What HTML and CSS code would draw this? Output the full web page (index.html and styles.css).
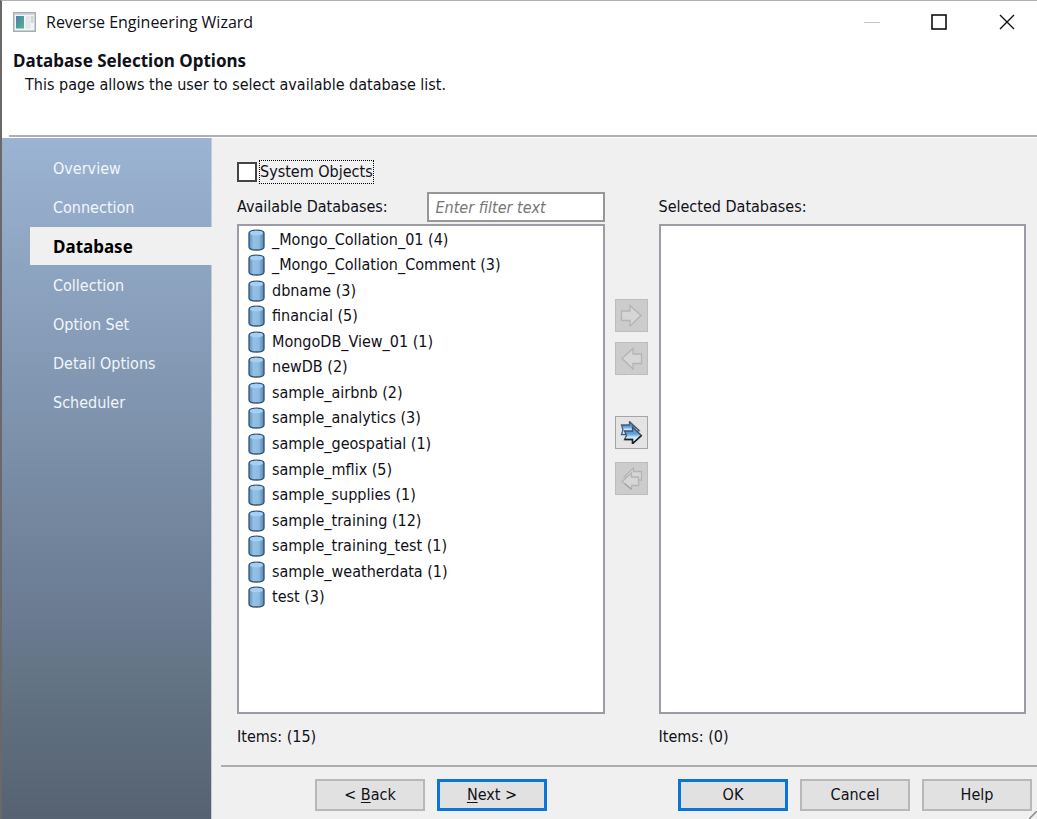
FILE: index.html
```html
<!DOCTYPE html>
<html lang="en">
<head>
<meta charset="utf-8">
<title>Reverse Engineering Wizard</title>
<link rel="stylesheet" href="styles.css">
</head>
<body>
<svg class="defs" aria-hidden="true">
  <defs>
    <linearGradient id="cyl" x1="0" x2="1" y1="0" y2="0">
      <stop offset="0" stop-color="#5d90bd"/>
      <stop offset="0.3" stop-color="#93c0e6"/>
      <stop offset="0.65" stop-color="#8dbbe2"/>
      <stop offset="1" stop-color="#5785b0"/>
    </linearGradient>
    <linearGradient id="blue" x1="0" x2="0" y1="0" y2="1">
      <stop offset="0" stop-color="#4d8fce"/>
      <stop offset="0.4" stop-color="#5b9fdb"/>
      <stop offset="0.6" stop-color="#cfe4f6"/>
      <stop offset="1" stop-color="#f7fbff"/>
    </linearGradient>
    <linearGradient id="pane" x1="0" x2="1" y1="0" y2="1">
      <stop offset="0" stop-color="#4d7fb0"/>
      <stop offset="1" stop-color="#55b388"/>
    </linearGradient>
    <symbol id="db" viewBox="0 0 17 22">
      <path d="M1 4C1 0.2 16 0.2 16 4V18C16 22 1 22 1 18Z" fill="url(#cyl)" stroke="#35526c" stroke-width="1.300"/>
      <ellipse cx="8.500" cy="4" rx="6.500" ry="2.300" fill="#a4d0f5"/>
    </symbol>
  </defs>
</svg>
<div class="window">
  <header class="titlebar">
    <svg class="app-icon" viewBox="0 0 23 20" aria-hidden="true">
      <rect x="0.750" y="0.750" width="21.500" height="18.500" fill="#f3f4f5" stroke="#a3adb5" stroke-width="1.500"/>
      <path d="M1.500 2H21.500" stroke="#c4ccd3" stroke-width="1.500"/>
      <rect x="3" y="4" width="8" height="12.500" fill="url(#pane)"/>
      <rect x="12.500" y="4" width="5" height="12.500" fill="#e4e6e9"/>
      <rect x="18" y="4" width="2.500" height="7" fill="#c9d9d8"/>
    </svg>
    <h1 class="title">Reverse Engineering Wizard</h1>
    <div class="caption-buttons">
      <button class="caption minimize" aria-label="Minimize" disabled><svg viewBox="0 0 16 16"><path d="M0 8.500H16" stroke="#c4c4c4"/></svg></button>
      <button class="caption maximize" aria-label="Maximize"><svg viewBox="0 0 16 16"><rect x="1" y="1" width="14" height="14" fill="none" stroke="#000" stroke-width="1.500"/></svg></button>
      <button class="caption close" aria-label="Close"><svg viewBox="0 0 16 16"><path d="M1 1L15 15M15 1L1 15" stroke="#111" stroke-width="1.400"/></svg></button>
    </div>
  </header>
  <div class="banner">
    <h2 class="banner-title">Database Selection Options</h2>
    <p class="banner-text">This page allows the user to select available database list.</p>
  </div>
  <div class="body">
    <nav class="steps">
      <a class="step" href="#">Overview</a>
      <a class="step" href="#">Connection</a>
      <a class="step current" href="#" aria-current="step">Database</a>
      <a class="step" href="#">Collection</a>
      <a class="step" href="#">Option Set</a>
      <a class="step" href="#">Detail Options</a>
      <a class="step" href="#">Scheduler</a>
    </nav>
    <main class="main">
      <div class="content">
        <div class="check-row">
          <input class="check" type="checkbox" id="sys"><label class="check-label" for="sys">System Objects</label>
        </div>
        <div class="picker">
          <div class="list-head">
            <label for="filter">Available Databases:</label>
            <input class="filter" id="filter" type="text" placeholder="Enter filter text">
          </div>
          <span></span>
          <div class="list-head">Selected Databases:</div>
          <div class="list">
            <ul class="items">
              <li class="item"><svg class="db"><use href="#db"/></svg>_Mongo_Collation_01 (4)</li>
              <li class="item"><svg class="db"><use href="#db"/></svg>_Mongo_Collation_Comment (3)</li>
              <li class="item"><svg class="db"><use href="#db"/></svg>dbname (3)</li>
              <li class="item"><svg class="db"><use href="#db"/></svg>financial (5)</li>
              <li class="item"><svg class="db"><use href="#db"/></svg>MongoDB_View_01 (1)</li>
              <li class="item"><svg class="db"><use href="#db"/></svg>newDB (2)</li>
              <li class="item"><svg class="db"><use href="#db"/></svg>sample_airbnb (2)</li>
              <li class="item"><svg class="db"><use href="#db"/></svg>sample_analytics (3)</li>
              <li class="item"><svg class="db"><use href="#db"/></svg>sample_geospatial (1)</li>
              <li class="item"><svg class="db"><use href="#db"/></svg>sample_mflix (5)</li>
              <li class="item"><svg class="db"><use href="#db"/></svg>sample_supplies (1)</li>
              <li class="item"><svg class="db"><use href="#db"/></svg>sample_training (12)</li>
              <li class="item"><svg class="db"><use href="#db"/></svg>sample_training_test (1)</li>
              <li class="item"><svg class="db"><use href="#db"/></svg>sample_weatherdata (1)</li>
              <li class="item"><svg class="db"><use href="#db"/></svg>test (3)</li>
            </ul>
          </div>
          <div class="transfer">
            <div class="pair single">
              <button class="move" disabled aria-label="Add"><svg viewBox="0 0 23 23"><path d="M1.500 7H10V1.500L21 11.500L10 22V16.500H1.500Z" fill="#d6d6d6" stroke="#b4b4b4" stroke-width="1.300"/></svg></button>
              <button class="move" disabled aria-label="Remove"><svg viewBox="0 0 23 23"><path d="M21.500 7H13V1.500L2 11.500L13 22V16.500H21.500Z" fill="#d6d6d6" stroke="#b4b4b4" stroke-width="1.300"/></svg></button>
            </div>
            <div class="pair all">
              <button class="move" aria-label="Add all"><svg viewBox="0 0 23 23"><path d="M1.500 4H9.500V0.800L19 9.500L13 13.500H1.500L3 9Z" fill="url(#blue)" stroke="#3f5f80" stroke-width="1.300"/><path d="M10 1L20 10.500" stroke="#555" stroke-width="1.300" stroke-dasharray="1.500 1.200"/><path d="M4.500 10H12.500V6L21.500 14.500L12.500 23V18.500H4.500L6.500 14.500Z" fill="url(#blue)" stroke="#3a536b" stroke-width="1.300"/><path d="M4.500 18.500H12.500V22.500L21.500 14.500" fill="none" stroke="#1c2024" stroke-width="1.500"/></svg></button>
              <button class="move" disabled aria-label="Remove all"><svg viewBox="0 0 23 23"><path d="M21.500 4.500H13.500V1L4.500 9.500L10 13H21.500Z" fill="#d6d6d6" stroke="#b4b4b4" stroke-width="1.300"/><path d="M18.500 10H11.500V6L2 14.500L11.500 22.500V18.500H18.500Z" fill="#d6d6d6" stroke="#b4b4b4" stroke-width="1.300"/><path d="M4.500 16.500L11.500 22" stroke="#a4a4a4" stroke-width="1.400"/></svg></button>
            </div>
          </div>
          <div class="list"></div>
          <div class="count">Items: (15)</div>
          <span></span>
          <div class="count">Items: (0)</div>
        </div>
      </div>
      <footer class="footer">
        <div class="group">
          <button class="btn">&lt; <u>B</u>ack</button>
          <button class="btn primary"><u>N</u>ext &gt;</button>
        </div>
        <div class="group">
          <button class="btn primary">OK</button>
          <button class="btn">Cancel</button>
          <button class="btn">Help</button>
        </div>
        <svg class="grip" viewBox="0 0 8 8" aria-hidden="true"><path d="M0 8L8 0" stroke="#888" stroke-width="1.500" fill="none"/></svg>
      </footer>
    </main>
  </div>
</div>
</body>
</html>
```
FILE: styles.css
```css
* {
  box-sizing: border-box;
}

body {
  margin: 0;
  font-family: "DejaVu Sans Condensed", "Noto Sans", sans-serif;
  font-size: 16px;
  line-height: 20px;
  color: #101018;
}

button,
input {
  font: inherit;
  color: inherit;
}

.defs {
  position: absolute;
  width: 0;
  height: 0;
}

.window {
  display: flex;
  flex-direction: column;
  min-height: 100vh;
  background: #fff;
  border-top: 1px solid #b0b0b0;
  border-left: 2px solid #6b6967;
}

.titlebar {
  display: flex;
  align-items: center;
  height: 42px;
  padding-left: 11px;
}

.app-icon {
  width: 23px;
  height: 20px;
  margin-right: 10px;
}

.title {
  flex: 1;
  margin: 0;
  font-family: "Open Sans", sans-serif;
  font-size: 16px;
  font-weight: 400;
}

.caption-buttons {
  display: flex;
}

.caption {
  display: grid;
  place-items: center;
  height: 40px;
  padding: 0;
  border: 0;
  background: none;
}

.minimize {
  width: 58px;
}

.maximize {
  width: 76px;
}

.close {
  width: 60px;
}

.caption svg {
  width: 16px;
  height: 16px;
}

.banner {
  height: 94px;
  margin-left: 7px;
  padding: 7px 0 0 4px;
  border-bottom: 2px solid #b0b0b0;
}

.banner-title {
  margin: 0;
  font-family: "Noto Sans", sans-serif;
  font-size: 17px;
  font-weight: 700;
  line-height: 22px;
}

.banner-text {
  margin: 0;
  padding: 3px 12px;
}

.body {
  display: flex;
  flex: 1;
  padding-top: 1px;
}

.steps {
  display: flex;
  flex-direction: column;
  gap: 1px;
  width: 210px;
  padding: 11px 0 0 28px;
  background: linear-gradient(#9bb4d3, #68798f 73%, #637484 79%, #566272);
  border-right: 1px solid #c5ccd5;
}

.step {
  height: 38px;
  padding-left: 23px;
  line-height: 40px;
  color: #f2f6fb;
  text-decoration: none;
}

.step.current {
  margin-right: -1px;
  background: #f0f0f0;
  color: #000;
  font-family: "Noto Sans", sans-serif;
  font-size: 17px;
  font-weight: 700;
}

.main {
  display: flex;
  flex: 1;
  flex-direction: column;
  background: #f0f0f0;
}

.content {
  display: flex;
  flex: 1;
  flex-direction: column;
  padding: 22px 11px 5px 25px;
}

.check-row {
  display: flex;
  align-items: center;
  gap: 3px;
  height: 23px;
}

.check {
  appearance: none;
  width: 20px;
  height: 20px;
  margin: 0;
  border: 2px solid #444;
  background: #fff;
}

.check:checked {
  background: #0078d7;
}

.check-label {
  line-height: 22px;
  outline: 1px dotted #000;
}

.picker {
  display: grid;
  flex: 1;
  grid-template-columns: 1fr 54px 1fr;
  grid-template-rows: 38px 1fr 46px;
  padding-top: 3px;
}

.list-head {
  display: flex;
  align-items: center;
  justify-content: space-between;
  padding-top: 4px;
}

.filter {
  width: 178px;
  height: 30px;
  padding: 0 7px;
  border: 2px solid #979797;
  border-radius: 0;
  background: #fff;
}

.filter::placeholder {
  color: #777;
  font-style: italic;
  opacity: 1;
}

.list {
  padding: 1px 9px;
  border: 2px solid #9a9da5;
  background: #fff;
}

.items {
  display: grid;
  grid-auto-rows: 1fr;
  height: 383px;
  margin: 0;
  padding: 0;
  list-style: none;
}

.item {
  display: flex;
  align-items: center;
  gap: 7px;
  line-height: 22px;
}

.db {
  width: 17px;
  height: 22px;
}

.transfer {
  display: flex;
  flex-direction: column;
  align-items: center;
  gap: 41px;
  padding-top: 75px;
}

.pair {
  display: flex;
  flex-direction: column;
}

.single {
  gap: 10px;
}

.all {
  gap: 13px;
}

.move {
  display: grid;
  place-items: center;
  width: 33px;
  height: 33px;
  padding: 0;
  border: 1px solid #a5a5a5;
  background: #e4e4e4;
}

.move:disabled {
  border-color: #bdbdbd;
  background: #cccccc;
}

.move svg {
  width: 23px;
  height: 23px;
}

.count {
  padding-top: 13px;
}

.footer {
  position: relative;
  display: flex;
  justify-content: space-between;
  margin-left: 9px;
  padding: 12px 5px 8px 94px;
  border-top: 2px solid #adadad;
}

.group {
  display: flex;
  gap: 12px;
}

.btn {
  width: 110px;
  height: 32px;
  padding: 0;
  border: 2px solid #b8b8b8;
  background: #e1e1e1;
}

.btn.primary {
  border: 3px solid #0a75d8;
}

.btn u {
  text-underline-offset: 2px;
}

.grip {
  position: absolute;
  right: 0;
  bottom: 0;
  width: 8px;
  height: 8px;
}
```
